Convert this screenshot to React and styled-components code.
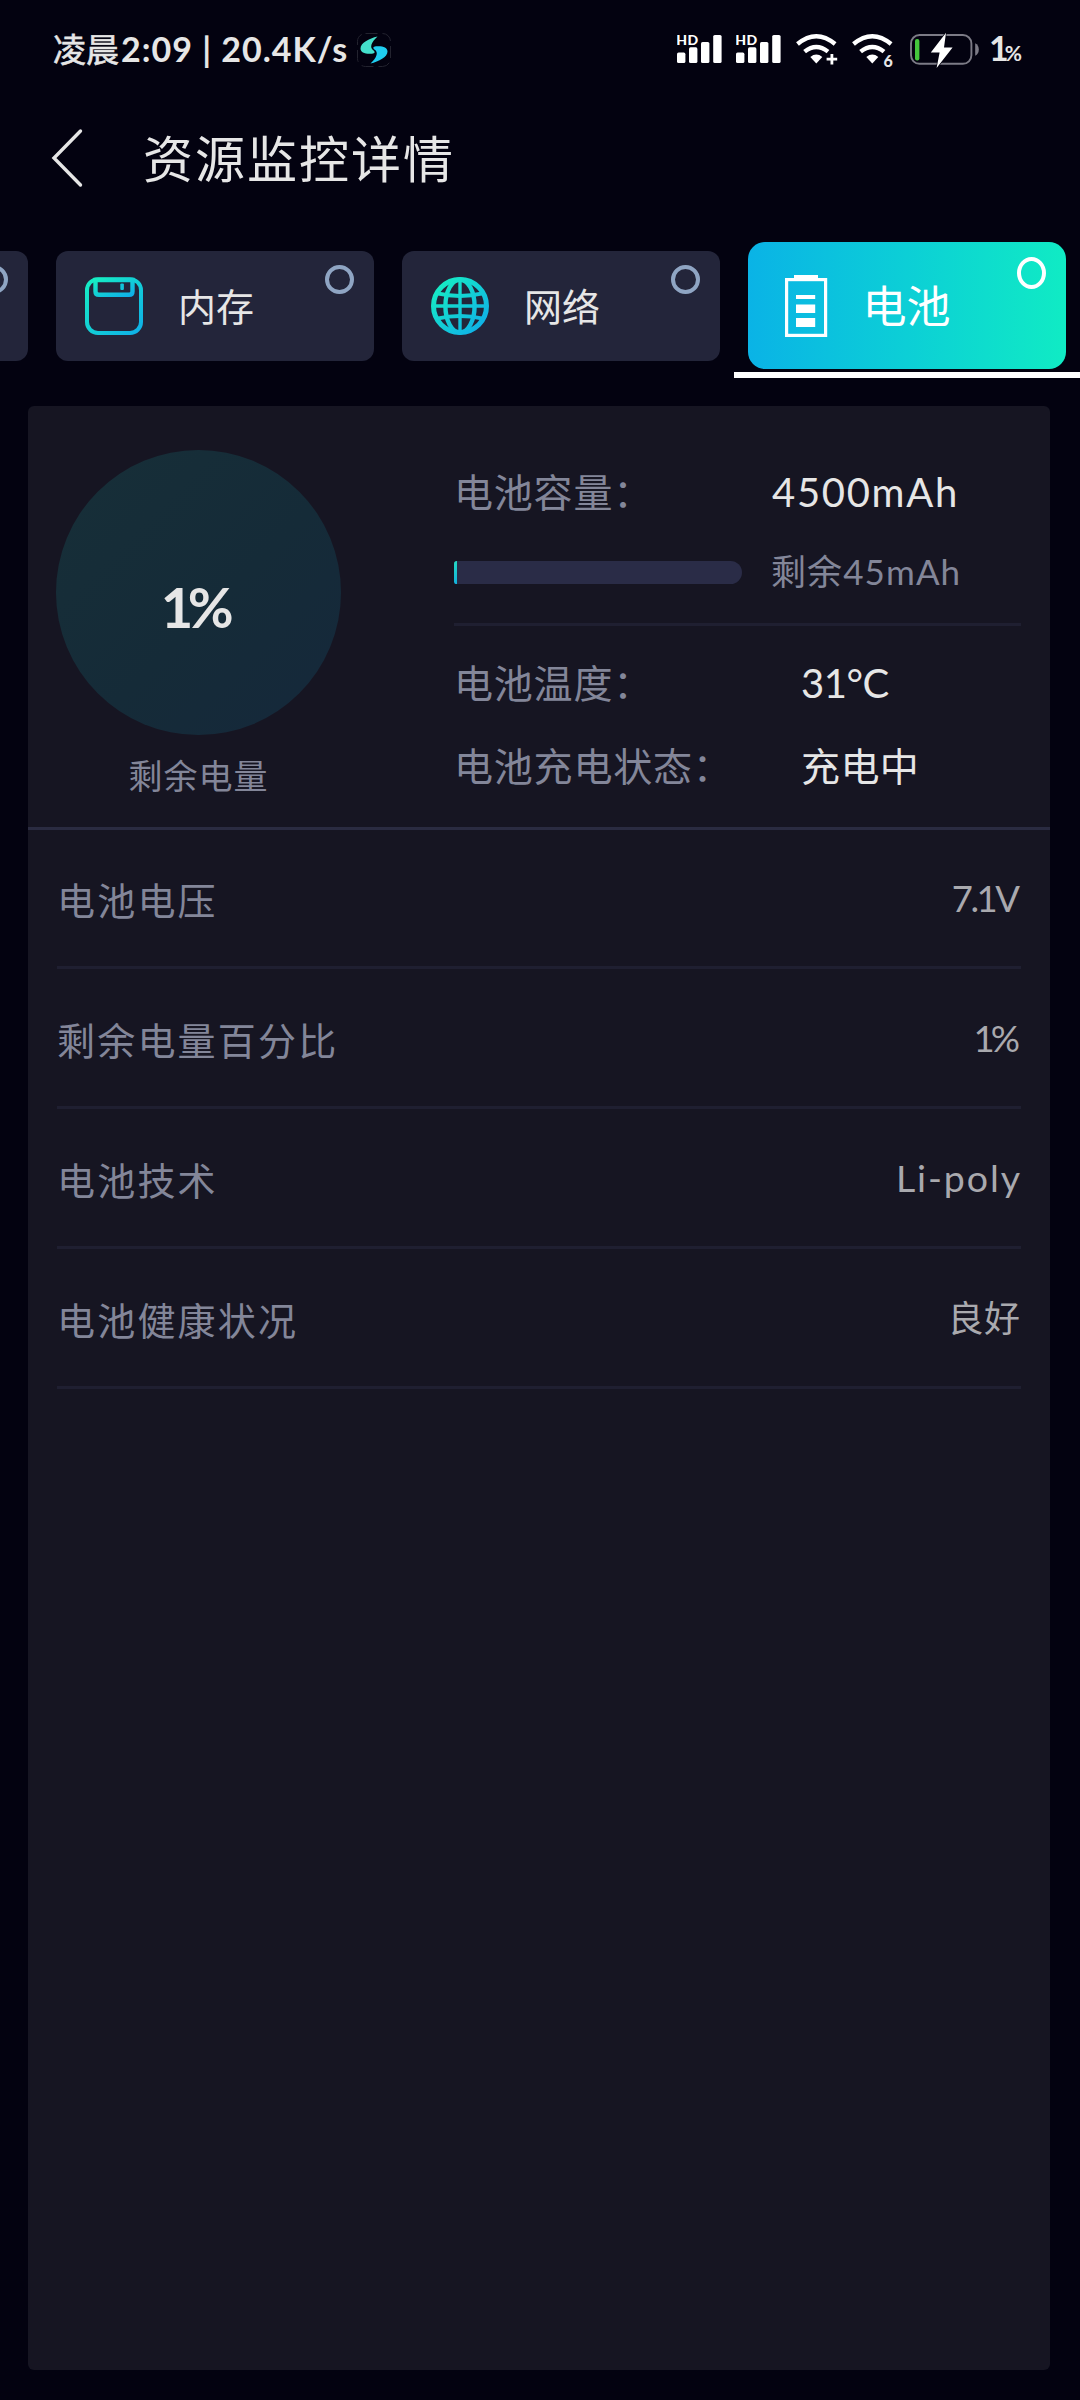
import React from 'react'
import styled, { createGlobalStyle } from 'styled-components'

const GlobalStyle = createGlobalStyle`
  * {
    box-sizing: border-box;
  }
  body {
    margin: 0;
    background: #030210;
    overflow: hidden;
  }
`

const Screen = styled.div`
  width: 1080px;
  height: 2400px;
  display: flex;
  flex-direction: column;
  overflow: hidden;
  background: #030210;
  color: #e6e6e6;
  font-family: Lato, 'Noto Sans CJK SC', sans-serif;
  white-space: nowrap;
`

const StatusBar = styled.header`
  display: flex;
  align-items: center;
  height: 100px;
  padding: 0 58px 0 53px;
`

const Clock = styled.div`
  display: flex;
  align-items: baseline;
  width: 304px;
  margin-top: -2px;
  font-size: 33px;
  line-height: 40px;
  -webkit-text-stroke: 0.6px #e6e6e6;
`

const ClockDigits = styled.span`
  margin-left: 2px;
  font-size: 34px;
  font-weight: 700;
  letter-spacing: 1px;
  white-space: pre;
  -webkit-text-stroke: 0;
`

const StatusLogo = styled.svg`
  width: 34px;
  height: 34px;
`

const StatusIcons = styled.div`
  display: flex;
  align-items: center;
  margin-left: auto;
  height: 40px;
`

const StatusIcon = styled.svg`
  display: block;
  width: ${(p) => p.$w}px;
  height: 40px;
  margin-right: ${(p) => p.$mr || 0}px;
`

const Percent = styled.span`
  display: flex;
  align-items: baseline;
  width: 33px;
  font-size: 34px;
  line-height: 40px;
  font-weight: 700;
  letter-spacing: -4px;

  small {
    font-size: 21px;
    letter-spacing: 0;
  }
`

const TitleBar = styled.div`
  display: flex;
  align-items: center;
  height: 116px;
  padding-left: 50px;
`

const BackIcon = styled.svg`
  width: 34px;
  height: 60px;
`

const Title = styled.h1`
  margin: 1px 0 0 59px;
  font-size: 50px;
  line-height: 60px;
  font-weight: 400;
  letter-spacing: 2px;
`

const TabStrip = styled.nav`
  display: flex;
  height: 162px;
  margin-left: -304px;
`

const TabCell = styled.div`
  flex: none;
  display: flex;
  flex-direction: column;
  justify-content: flex-end;
  width: 346px;
  height: 162px;
  padding: ${(p) => (p.$active ? '0' : '0 0 17px')};
`

const Tab = styled.div`
  position: relative;
  display: flex;
  align-items: center;
  width: 318px;
  height: ${(p) => (p.$active ? 127 : 110)}px;
  margin: ${(p) => (p.$active ? '0 14px 3px' : '0 14px')};
  padding-left: 29px;
  border-radius: ${(p) => (p.$active ? 17 : 12)}px;
  background: ${(p) =>
    p.$active ? 'linear-gradient(90deg, #0ab3e6, #0ccfd6 50%, #10ebc4)' : '#23253a'};
`

const TabIcon = styled.svg`
  width: 58px;
  height: 62px;
`

const TabLabel = styled.span`
  width: ${(p) => (p.$active ? 143 : 146)}px;
  text-align: center;
  font-size: ${(p) => (p.$active ? 44 : 38)}px;
  line-height: 60px;
  color: ${(p) => (p.$active ? '#ffffff' : '#e6e6e6')};
`

const Ring = styled.i`
  position: absolute;
  right: 20px;
  top: ${(p) => (p.$active ? 15 : 14)}px;
  width: 29px;
  height: ${(p) => (p.$active ? 32 : 29)}px;
  border: 4px solid ${(p) => (p.$active ? '#ffffff' : '#8fa5c3')};
  border-radius: 50%;
`

const Underline = styled.div`
  height: 6px;
  background: #ffffff;
`

const Panel = styled.main`
  width: 1022px;
  height: 1964px;
  margin: 28px 0 0 28px;
  border-radius: 6px;
  background: #161522;
`

const Summary = styled.section`
  display: flex;
  height: 424px;
  border-bottom: 3px solid #2a2b41;
`

const Gauge = styled.div`
  display: flex;
  flex-direction: column;
  align-items: center;
  width: 285px;
  margin: 44px 113px 0 28px;
`

const GaugeDisc = styled.div`
  display: flex;
  align-items: center;
  justify-content: center;
  width: 285px;
  height: 285px;
  padding: 28px 8px 0 0;
  border-radius: 50%;
  background: linear-gradient(135deg, #172f38, #152b38 55%, #15283b);
  font-size: 56px;
  line-height: 60px;
  font-weight: 700;
  letter-spacing: -5.5px;
`

const GaugeLabel = styled.span`
  margin-top: 16px;
  font-size: 34px;
  line-height: 50px;
  letter-spacing: 1px;
  color: #838699;
`

const Facts = styled.div`
  width: 567px;
  padding-top: 61px;
`

const FactRow = styled.div`
  display: flex;
  align-items: center;
  height: ${(p) => p.$h}px;
  padding-top: ${(p) => p.$drop || 0}px;
`

const FactName = styled.span`
  width: ${(p) => p.$w}px;
  font-size: 39px;
  line-height: 50px;
  letter-spacing: 0.8px;
  color: #838699;
`

const FactValue = styled.span`
  font-size: ${(p) => p.$size || 40}px;
  line-height: 50px;
  letter-spacing: ${(p) => p.$gap || 0}px;
`

const FactNote = styled.span`
  margin: -3px 0 0 29px;
  font-size: 35px;
  line-height: 50px;
  letter-spacing: 1.1px;
  color: #838699;
`

const Track = styled.div`
  width: 288px;
  height: 23px;
  border-radius: 3px 12px 12px 3px;
  background: #2a2c47;
  overflow: hidden;
`

const TrackFill = styled.div`
  height: 100%;
  background: linear-gradient(180deg, #24d8c2, #12b2dc);
`

const Separator = styled.div`
  height: 3px;
  margin-bottom: 16px;
  background: #1f1f31;
`

const List = styled.ul`
  margin: -1px 29px 0;
  padding: 0;
  list-style: none;
`

const ListRow = styled.li`
  display: flex;
  align-items: center;
  justify-content: space-between;
  height: 140px;
  border-bottom: 3px solid #1f1f31;
`

const ListName = styled.span`
  padding-top: 4px;
  font-size: 38px;
  line-height: 50px;
  letter-spacing: 2.2px;
  color: #838699;
`

const ListValue = styled.span`
  font-size: ${(p) => p.$size}px;
  line-height: 50px;
  letter-spacing: ${(p) => p.$gap}px;
  margin-right: ${(p) => 1 - p.$gap}px;
  color: #a9a9ae;
`

const Gradient = ({ id }) => (
  <linearGradient id={id} x1="0" y1="0" x2="1" y2="1">
    <stop offset="0" stopColor="#16edc3" />
    <stop offset="1" stopColor="#0fb0e8" />
  </linearGradient>
)

const MemoryIcon = () => (
  <TabIcon viewBox="0 -2 58 62">
    <defs>
      <Gradient id="mem" />
      <Gradient id="slot" />
    </defs>
    <rect x="2" y="2.2" width="54" height="53.8" rx="11" fill="none" stroke="url(#mem)" strokeWidth="4" />
    <path d="M10.5 3V14.5Q10.5 17.8 14 17.8H44Q47.5 17.8 47.5 14.5V3Z" fill="none" stroke="url(#slot)" strokeWidth="4.4" />
    <rect x="35.3" y="6.5" width="3.6" height="6.5" rx="1" fill="#12c4d8" />
  </TabIcon>
)

const NetworkIcon = () => (
  <TabIcon viewBox="0 -2 58 62">
    <defs>
      <linearGradient id="net" gradientUnits="userSpaceOnUse" x1="6" y1="6" x2="52" y2="52">
        <stop offset="0" stopColor="#16edc3" />
        <stop offset="1" stopColor="#0fb0e8" />
      </linearGradient>
    </defs>
    <g fill="none" stroke="url(#net)" strokeWidth="4.4">
      <circle cx="29" cy="29" r="26.5" strokeWidth="5" />
      <ellipse cx="29" cy="29" rx="14.6" ry="26.5" />
      <path d="M29.01 3L29 55" strokeWidth="3.4" />
      <path d="M3 29L55 29.01" strokeWidth="3.6" />
      <path d="M6 16.4Q29 21.4 52 16.4" strokeWidth="4" />
      <path d="M6 41.6Q29 36.6 52 41.6" strokeWidth="4" />
    </g>
  </TabIcon>
)

const BatteryIcon = () => (
  <TabIcon viewBox="0 0 58 62">
    <rect x="9.6" y="4.6" width="39" height="55.8" fill="none" stroke="#fff" strokeWidth="3.2" />
    <path d="M17 0H41V6H17ZM19 20H38.2V24H19ZM19 29.5H38.2V38H19ZM19 43H38.2V52H19Z" fill="#fff" />
  </TabIcon>
)

const SignalIcon = ({ mr }) => (
  <StatusIcon $w={45} $mr={mr} viewBox="0 0 45 40">
    <g fill="#fff">
      <rect x="0" y="22.6" width="8.4" height="10.4" rx="1.6" />
      <rect x="12" y="17.3" width="8.4" height="15.7" rx="1.6" />
      <rect x="24" y="12" width="8.4" height="21" rx="1.6" />
      <rect x="36.2" y="5" width="8.4" height="28" rx="1.6" />
      <text x="-0.8" y="14.5" fontSize="14" fontWeight="900" fontFamily="Lato, sans-serif" letterSpacing="0.4">
        HD
      </text>
    </g>
  </StatusIcon>
)

const WifiIcon = ({ mark, mr }) => (
  <StatusIcon $w={42} $mr={mr} viewBox="0 0 42 40">
    <g fill="none" stroke="#fff" strokeWidth="4.4">
      <path d="M1.5 14Q20.3 -1.6 39.1 14" />
      <path d="M8.6 21.6Q20.3 12.2 32 21.6" />
    </g>
    <path d="M20.3 33.4L14.3 27Q20.3 22.2 26.3 27Z" fill="#fff" />
    {mark === '6' ? (
      <text x="31.4" y="36.8" fontSize="16" fontWeight="900" fill="#e6e6e6" fontFamily="Lato, sans-serif">
        6
      </text>
    ) : (
      <path d="M30.6 29.2H41.2M35.9 24V34.4" stroke="#fff" strokeWidth="2.8" />
    )}
  </StatusIcon>
)

const ChargeIcon = ({ mr }) => (
  <StatusIcon $w={69} $mr={mr} viewBox="0 0 69 40">
    <rect x="1" y="5" width="60.4" height="28.8" rx="8.5" fill="none" stroke="#7c7b86" strokeWidth="1.9" />
    <path d="M65.2 13.3Q68.8 15 68.8 19.5T65.2 25.7Z" fill="#7c7b86" />
    <rect x="5" y="9" width="4.4" height="21.4" rx="2" fill="#45c63c" />
    <path
      d="M36 2.8L20.8 22.4H29.6L26.6 38L42.6 17.6H34Z"
      fill="#fff"
      stroke="#030210"
      strokeWidth="1.4"
      paintOrder="stroke"
      strokeLinejoin="round"
    />
  </StatusIcon>
)

const SWIRL =
  'M20.5 3.5C12 5.5 3.5 10 3.5 15.5C3.5 19.5 8 21.2 15 20.7C18 20.5 18.5 18.8 16.2 17.2C12.5 14.5 14 9.5 20.5 3.5Z'

const tabs = [
  { label: '' },
  { label: '内存', icon: <MemoryIcon /> },
  { label: '网络', icon: <NetworkIcon /> },
  { label: '电池', icon: <BatteryIcon />, active: true },
]

const details = [
  { name: '电池电压', value: '7.1V', size: 36.5, gap: -2.5 },
  { name: '剩余电量百分比', value: '1%', size: 36.5, gap: -4 },
  { name: '电池技术', value: 'Li-poly', size: 37.5, gap: 1.9 },
  { name: '电池健康状况', value: '良好', size: 36, gap: 0.5 },
]

const App = () => {
  const level = 1

  return (
    <Screen>
      <GlobalStyle />
      <StatusBar>
        <Clock>
          凌晨<ClockDigits>2:09 | 20.4K/s</ClockDigits>
        </Clock>
        <StatusLogo viewBox="0 0 34 34">
          <rect x="0.5" y="0.5" width="33" height="33" rx="8" fill="none" stroke="#23232f" strokeDasharray="12 5" />
          <path d={SWIRL} fill="#44e0cc" />
          <path d={SWIRL} fill="#1fcdf0" transform="rotate(180 17 17)" />
        </StatusLogo>
        <StatusIcons>
          <SignalIcon mr={14} />
          <SignalIcon mr={15} />
          <WifiIcon mark="+" mr={14} />
          <WifiIcon mark="6" mr={16} />
          <ChargeIcon mr={10} />
          <Percent>
            1<small>%</small>
          </Percent>
        </StatusIcons>
      </StatusBar>

      <TitleBar>
        <BackIcon viewBox="0 0 34 60">
          <path d="M30.5 3L4 30L30.5 57" fill="none" stroke="#e6e6e6" strokeWidth="3.4" strokeLinecap="round" />
        </BackIcon>
        <Title>资源监控详情</Title>
      </TitleBar>

      <TabStrip>
        {tabs.map((tab, index) => (
          <TabCell key={index} $active={tab.active}>
            <Tab $active={tab.active}>
              {tab.icon}
              <TabLabel $active={tab.active}>{tab.label}</TabLabel>
              <Ring $active={tab.active} />
            </Tab>
            {tab.active && <Underline />}
          </TabCell>
        ))}
      </TabStrip>

      <Panel>
        <Summary>
          <Gauge>
            <GaugeDisc>{level}%</GaugeDisc>
            <GaugeLabel>剩余电量</GaugeLabel>
          </Gauge>
          <Facts>
            <FactRow $h={50}>
              <FactName $w={318}>电池容量：</FactName>
              <FactValue $gap={1.7}>4500mAh</FactValue>
            </FactRow>
            <FactRow $h={106} $drop={4}>
              <Track>
                <TrackFill style={{ width: `${level}%` }} />
              </Track>
              <FactNote>剩余45mAh</FactNote>
            </FactRow>
            <Separator />
            <FactRow $h={82}>
              <FactName $w={347}>电池温度：</FactName>
              <FactValue $gap={-0.5}>31°C</FactValue>
            </FactRow>
            <FactRow $h={82} $drop={1}>
              <FactName $w={347}>电池充电状态：</FactName>
              <FactValue $size={39} $gap={0.4}>
                充电中
              </FactValue>
            </FactRow>
          </Facts>
        </Summary>
        <List>
          {details.map((item) => (
            <ListRow key={item.name}>
              <ListName>{item.name}</ListName>
              <ListValue $size={item.size} $gap={item.gap}>
                {item.value}
              </ListValue>
            </ListRow>
          ))}
        </List>
      </Panel>
    </Screen>
  )
}

export default App
